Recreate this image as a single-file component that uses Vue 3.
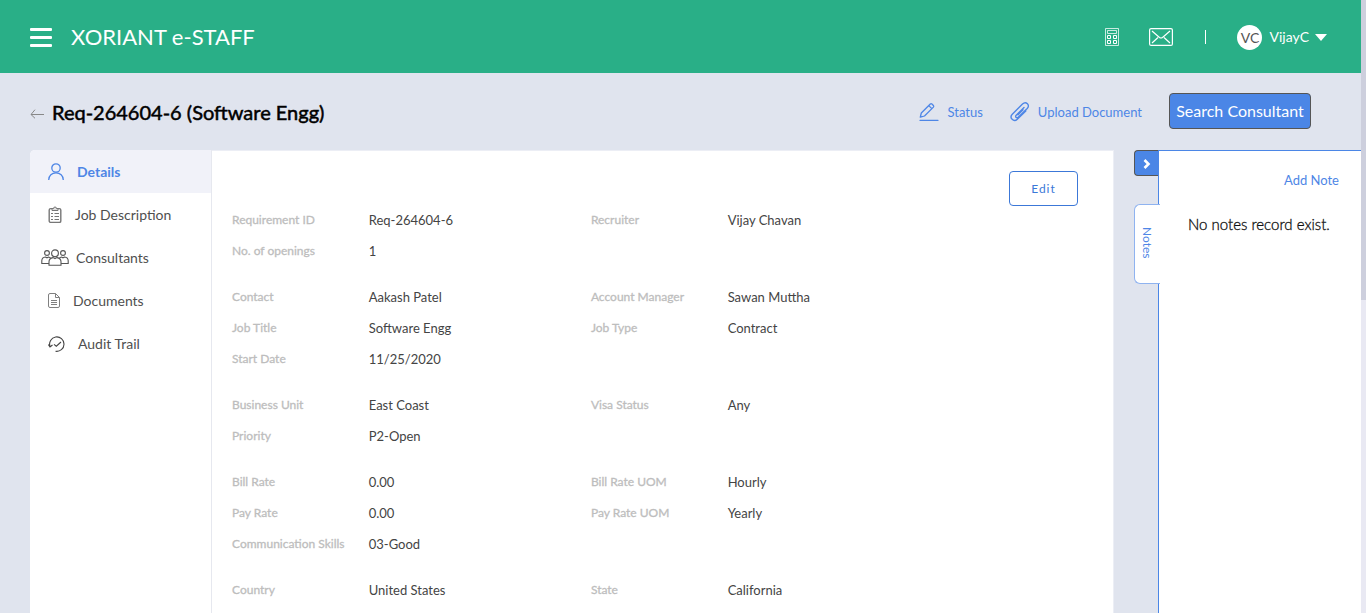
<script setup>
const nav = [
  { icon: 'user', label: 'Details', active: true },
  { icon: 'clipboard', label: 'Job Description' },
  { icon: 'group', label: 'Consultants' },
  { icon: 'doc', label: 'Documents' },
  { icon: 'history', label: 'Audit Trail' },
]
const groups = [
  [
    ['Requirement ID', 'Req-264604-6', 'Recruiter', 'Vijay Chavan'],
    ['No. of openings', '1'],
  ],
  [
    ['Contact', 'Aakash Patel', 'Account Manager', 'Sawan Muttha'],
    ['Job Title', 'Software Engg', 'Job Type', 'Contract'],
    ['Start Date', '11/25/2020'],
  ],
  [
    ['Business Unit', 'East Coast', 'Visa Status', 'Any'],
    ['Priority', 'P2-Open'],
  ],
  [
    ['Bill Rate', '0.00', 'Bill Rate UOM', 'Hourly'],
    ['Pay Rate', '0.00', 'Pay Rate UOM', 'Yearly'],
    ['Communication Skills', '03-Good'],
  ],
  [['Country', 'United States', 'State', 'California']],
]
</script>

<template>
  <div class="page">
    <div class="app">
      <header class="topbar">
        <button class="menu" aria-label="Menu"><span></span><span></span><span></span></button>
        <div class="brand">XORIANT e-STAFF</div>
        <button class="plain" aria-label="Calculator">
          <svg width="14" height="18" viewBox="0 0 14 18" fill="none" stroke="#fff">
            <path d="M.5 .5h13v17H.5zM2.500 2.500h9v3h-9z" stroke-opacity=".75" />
            <path d="M2.500 7.500h3v3h-3zM8.500 7.500h3v3h-3zM2.500 12.500h3v3h-3zM8.500 12.500h3v3h-3z" />
          </svg>
        </button>
        <button class="plain mail" aria-label="Messages">
          <svg width="24" height="18" viewBox="0 0 24 18" fill="none" stroke="#fff" stroke-width="1.200">
            <rect x=".6" y=".6" width="22.800" height="16.800" rx="1.500" />
            <path d="M3 3l7.500 6.500q1.500 1 3 0L21 3M3 15l6-5.500M21 15l-6-5.500" />
          </svg>
        </button>
        <span class="divider"></span>
        <button class="plain account">
          <span class="avatar">VC</span>
          <span class="username">VijayC</span>
          <svg width="12" height="7" viewBox="0 0 12 7"><path d="M0 0h12L6 7z" fill="#fff" /></svg>
        </button>
      </header>

      <div class="titlebar">
        <a href="#" class="back" aria-label="Back">
          <svg width="14" height="10" viewBox="0 0 14 10" fill="none" stroke="#888"><path d="M5 .7L1 5.500l4 3.800M1 5.500h13" /></svg>
        </a>
        <h1>Req-264604-6 (Software Engg)</h1>
        <a href="#" class="action">
          <svg width="20" height="20" viewBox="0 0 20 20" fill="none" stroke="#4e86e6" stroke-width="1.300" stroke-linejoin="round">
            <path d="M1.300 15.200l1-4.200L11.300 2a1.200 1.200 0 0 1 1.600 0l1.500 1.500a1.200 1.200 0 0 1 0 1.600L5.500 14zM9.800 3.600l3 3" />
            <path d="M1 18.300h18" stroke-linecap="round" />
          </svg>
          <span>Status</span>
        </a>
        <a href="#" class="action upload">
          <svg width="20" height="20" viewBox="0 0 20 20" fill="none" stroke="#4e86e6" stroke-width="1.400" stroke-linecap="round">
            <path d="M14 5.600L6.200 13.200c-1.600 1.600.4 3.500 2 2l9-8.600c3.400-3.500-1.200-7.800-4.700-4.500L2.300 12.200c-3.400 3.600 1.400 8.400 5 5L15.800 9M13 7.800L8 12.700" />
          </svg>
          <span>Upload Document</span>
        </a>
        <button class="search">Search Consultant</button>
      </div>

      <div class="body">
        <nav class="side">
          <a v-for="n in nav" :key="n.label" href="#" :class="['item', n.icon, { active: n.active }]">
            <svg v-if="n.icon === 'user'" width="16" height="17" viewBox="0 0 16 17" fill="none" stroke="#4e86e6" stroke-width="1.300">
              <circle cx="8" cy="5" r="4.200" /><path d="M.7 17C.7 12.500 4 9.900 8 9.900s7.300 2.600 7.300 7.100" />
            </svg>
            <svg v-else-if="n.icon === 'clipboard'" width="14" height="17" viewBox="0 0 14 17" fill="none" stroke="#777">
              <rect x="1.200" y="2.600" width="11.600" height="13.800" rx="1.500" stroke-width="1.400" />
              <path d="M4 4.500v-2h1.500a1.500 1.500 0 0 1 3 0H10v2z" fill="#ddd" />
              <path d="M3 7.500h2M6.500 7.500h4.500M3 10.500h2M6.500 10.500h4.500M3 13.500h2M6.500 13.500h4.500" />
            </svg>
            <svg v-else-if="n.icon === 'group'" width="28" height="17" viewBox="0 0 28 17" fill="none" stroke="#555" stroke-width="1.100">
              <circle cx="14" cy="4.300" r="3.400" /><circle cx="6" cy="4" r="2.400" /><circle cx="22" cy="4" r="2.400" />
              <path d="M8 16.300v-3.500q0-3.500 4-4.200l2 1 2-1q4 .7 4 4.200v3.500zM8 14.500H.8v-2.700Q.8 8.500 4.500 8L6 8.800 7.500 8l2 .8M20 14.500h7.200v-2.700q0-3.300-3.700-3.800l-1.500.8-1.500-.8-2 .8" />
            </svg>
            <svg v-else-if="n.icon === 'doc'" width="12" height="15" viewBox="0 0 12 15" fill="none" stroke="#808080">
              <path d="M2 .5h5.500l4 4V13q0 1.500-1.500 1.500H2Q.5 14.500.5 13V2Q.5.500 2 .5zM7.500.5v4h4M3 7.500h6M3 9.500h6M3 11.500h6" />
            </svg>
            <svg v-else width="17" height="16" viewBox="0 0 17 16" fill="none" stroke="#444" stroke-width="1.100">
              <path d="M2 10.500A7.200 7.200 0 1 1 7.500 15.200M.4 8.500L2 11l2.500-2M6 8.300l2.300 1.900L13 6" />
            </svg>
            <span>{{ n.label }}</span>
          </a>
        </nav>

        <main class="details">
          <button class="edit">Edit</button>
          <div class="groups">
            <dl v-for="(g, i) in groups" :key="i">
              <div v-for="r in g" :key="r[0]" class="row">
                <dt>{{ r[0] }}</dt><dd>{{ r[1] }}</dd>
                <template v-if="r[2]"><dt>{{ r[2] }}</dt><dd>{{ r[3] }}</dd></template>
              </div>
            </dl>
          </div>
        </main>

        <aside class="notes">
          <div class="tabs">
            <button class="collapse" aria-label="Collapse notes">
              <svg width="8" height="10" viewBox="0 0 8 10" fill="none" stroke="#fff" stroke-width="2.600"><path d="M1.500 1l4 4-4 4" /></svg>
            </button>
            <button class="tab"><span>Notes</span></button>
          </div>
          <div class="panel">
            <a href="#">Add Note</a>
            <p>No notes record exist.</p>
          </div>
        </aside>
      </div>
    </div>
    <div class="scroll"><div class="thumb"></div></div>
  </div>
</template>

<style>
body { background: #e0e4ee; overflow: hidden; }
</style>

<style scoped>
.page { display: flex; height: 100vh; overflow: hidden; font-family: Lato, "Liberation Sans", sans-serif; background: #e0e4ee; color: #444; }
.app { flex: 1; min-width: 0; display: flex; flex-direction: column; }
.scroll { width: 5px; background: #e9e9f3; }
.thumb { height: 300px; background: #cdcfdd; }
button { font-family: inherit; cursor: pointer; padding: 0; }
a { text-decoration: none; color: #4e86e6; }
.topbar { height: 73px; flex: none; background: #29af87; display: flex; align-items: center; padding: 1px 34px 0 30px; box-sizing: border-box; color: #fff; }
.menu { width: 22px; border: 0; background: none; display: flex; flex-direction: column; gap: 5px; }
.menu span { height: 3px; width: 22px; background: #fff; border-radius: 1px; }
.brand { font-size: 22px; line-height: 28px; margin-left: 19px; flex: 1; }
.plain { border: 0; background: none; color: #fff; display: flex; align-items: center; }
.mail { margin-left: 30px; }
.divider { width: 1px; height: 14px; background: #fff; margin: 0 31px 0 32px; }
.account { font-size: 14px; gap: 6px; }
.username { padding-bottom: 2px; }
.avatar { width: 25px; height: 25px; line-height: 25px; border-radius: 50%; background: #fff; color: #555; font-size: 14px; text-align: center; margin-right: 1px; }
.titlebar { height: 77px; flex: none; display: flex; align-items: center; padding: 0 50px 0 30px; box-sizing: border-box; }
.back { display: flex; margin-right: 8px; padding-top: 4px; }
h1 { margin: 0; flex: 1; font-size: 20px; line-height: 28px; font-weight: 400; color: #000; -webkit-text-stroke: 0.5px #000; }
.action { display: flex; align-items: center; gap: 8px; font-size: 13px; }
.upload { margin-left: 27px; }
.search { margin-left: 27px; margin-bottom: 2px; width: 142px; height: 36px; border: 1px solid #555; border-radius: 4px; background: #4b86e6; color: #fff; font-size: 16px; }
.body { flex: 1; min-height: 0; display: flex; }
.side { width: 181px; margin-left: 30px; background: #fff; border-right: 1px solid #e6e8ef; border-top-left-radius: 5px; flex: none; }
.item { display: flex; align-items: center; height: 43px; padding-left: 18px; font-size: 14px; color: #4f4f4f; gap: 13px; }
.item.active { background: #f1f2f9; color: #4e86e6; font-weight: 700; border-top-left-radius: 5px; }
.item.group { padding-left: 11px; gap: 7px; }
.details { flex: 1; min-width: 0; background: #fff; border-top: 1px solid #eceef5; border-right: 1px solid #eceef5; box-sizing: border-box; padding: 20px 35px 0 20px; overflow: hidden; display: flex; flex-direction: column; }
.edit { align-self: flex-end; flex: none; width: 69px; height: 35px; border: 1px solid #3c78d8; border-radius: 4px; background: #fff; color: #3c78d8; font-size: 12px; letter-spacing: 1px; }
.groups { flex: none; margin-top: -2px; }
dl { margin: 0 0 15px; }
.row { display: grid; grid-template-columns: 16fr 26fr 16fr 41fr; height: 31px; line-height: 31px; }
dt { font-size: 12px; color: #bdbdbd; font-weight: 400; -webkit-text-stroke: 0.3px #bdbdbd; }
dd { margin: 0; padding-top: 1px; font-size: 13px; color: #444; }
.notes { display: flex; width: 227px; margin-left: 20px; flex: none; }
.tabs { width: 25px; display: flex; flex-direction: column; }
.collapse { height: 26px; width: 24px; border: 1px solid #555; border-right: 0; border-radius: 4px 0 0 4px; background: #4b86e6; padding-top: 2px; }
.tab { width: 26px; height: 80px; margin-top: 28px; border: 1px solid #8fb3f0; border-right: 0; border-radius: 6px 0 0 6px; background: #fff; color: #4e86e6; font-size: 12px; position: relative; }
.tab span { writing-mode: vertical-rl; }
.panel { flex: 1; background: #fff; border: 1px solid #4b86e6; border-width: 1px 0 0 1px; margin-left: -1px; padding: 19px 22px 0 29px; display: flex; flex-direction: column; }
.panel a { align-self: flex-end; font-size: 13px; line-height: 20px; }
.panel p { margin: 24px 0 0; font-size: 15px; line-height: 20px; font-weight: 300; color: #111; -webkit-text-stroke: 0.3px #111; white-space: nowrap; }
</style>
